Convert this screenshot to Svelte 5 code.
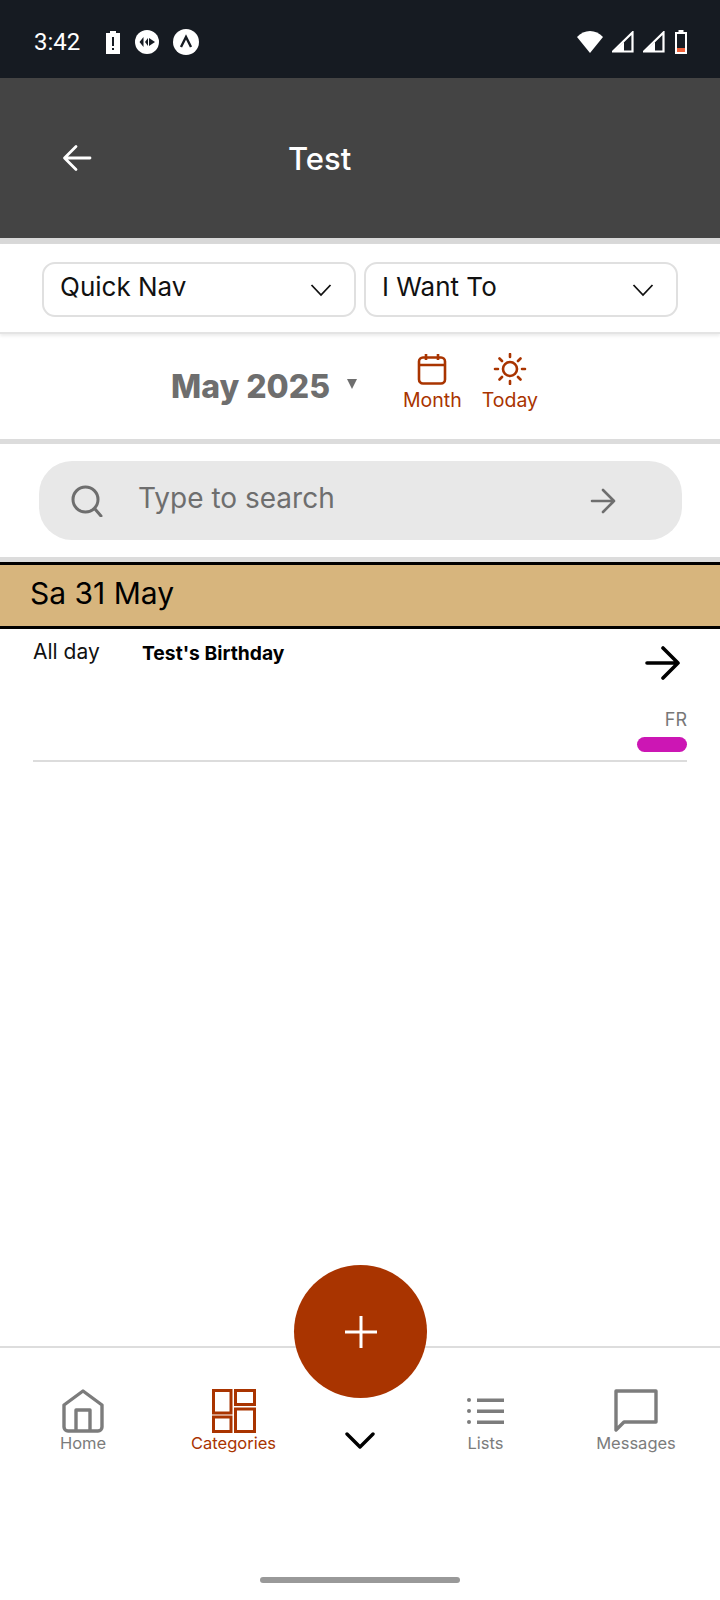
<script>
	const navItems = [
		{ label: 'Home', icon: 'home' },
		{ label: 'Categories', icon: 'grid', active: true },
		{ label: '', icon: 'more' },
		{ label: 'Lists', icon: 'list' },
		{ label: 'Messages', icon: 'chat' }
	];
</script>

<div class="page">
	<div class="status">
		<span class="time">3:42</span>
		<div class="status-left">
			<svg width="16" height="24" viewBox="0 0 16 24"><path d="M5 1h6v2h4v21H1V3h4z" fill="#fff" /><path d="M7 7h2v9H7zM7 18h2v2H7z" fill="#161b22" /></svg>
			<svg width="24" height="24" viewBox="0 0 24 24"><circle cx="12" cy="12" r="12" fill="#fff" /><path d="M4.500 12l4-5v10zM10 12l3-4v8zM14 8l6 4-6 4z" fill="#161b22" /></svg>
			<svg width="26" height="26" viewBox="0 0 26 26"><circle cx="13" cy="13" r="13" fill="#fff" /><path d="M8 18l5-10 5 10" fill="none" stroke="#161b22" stroke-width="2.400" /></svg>
		</div>
		<div class="status-right">
			<svg width="26" height="22" viewBox="0 0 26 22"><path d="M0 6C7-2 19-2 26 6L13 22z" fill="#fff" /></svg>
			<svg width="22" height="22" viewBox="0 0 22 22"><path d="M1 20.500L20.500 1.500V20.500z" fill="none" stroke="#fff" stroke-width="2.200" /><path d="M1 21L12 11v10z" fill="#fff" /></svg>
			<svg width="22" height="22" viewBox="0 0 22 22"><path d="M1 20.500L20.500 1.500V20.500z" fill="none" stroke="#fff" stroke-width="2.200" /><path d="M1 21L12 11v10z" fill="#fff" /></svg>
			<svg width="14" height="24" viewBox="0 0 14 24"><path d="M4.500 0h5v2H13v22H1V2h3.500z" fill="#fff" /><rect x="3" y="4" width="8" height="14" fill="#161b22" /><rect x="3" y="18" width="8" height="4" fill="#f0623a" /></svg>
		</div>
	</div>

	<header class="appbar">
		<svg class="back" width="30" height="28" viewBox="0 0 30 28"><path d="M28 14H3M14 2.500L2.500 14 14 25.500" fill="none" stroke="#fff" stroke-width="2.800" stroke-linecap="round" stroke-linejoin="round" /></svg>
		<h1>Test</h1>
	</header>

	<div class="select-row">
		<div class="select">
			<span>Quick Nav</span>
			<svg width="22" height="14" viewBox="0 0 22 14"><path d="M1.500 2L11 12l9.500-10" fill="none" stroke="#111" stroke-width="1.800" /></svg>
		</div>
		<div class="select">
			<span>I Want To</span>
			<svg width="22" height="14" viewBox="0 0 22 14"><path d="M1.500 2L11 12l9.500-10" fill="none" stroke="#111" stroke-width="1.800" /></svg>
		</div>
	</div>

	<div class="month-row">
		<span class="month">May 2025</span>
		<span class="caret"></span>
		<div class="action month-action">
			<svg width="30" height="32" viewBox="0 0 30 32" fill="none" stroke="#a93400" stroke-width="2.600"><rect x="2" y="4.500" width="26" height="26" rx="4" /><path d="M2 12h26M9 1v6M21 1v6" /></svg>
			<span>Month</span>
		</div>
		<div class="action">
			<svg width="34" height="32" viewBox="0 0 34 32" fill="none" stroke="#a93400" stroke-width="2.600" stroke-linecap="round"><circle cx="17" cy="16" r="7" /><path d="M17 1v3M17 28v3M2 16h3M29 16h3M6.500 5.500l2.500 2.500M27.500 5.500L25 8M6.500 26.500l2.500-2.500M27.500 26.500L25 24" /></svg>
			<span>Today</span>
		</div>
	</div>

	<div class="search-row">
		<div class="search">
			<svg width="32" height="32" viewBox="0 0 32 32" fill="none" stroke="#6e6e6e" stroke-width="3" stroke-linecap="round"><circle cx="14.500" cy="14.500" r="12.500" /><path d="M24 24l6 7" /></svg>
			<span class="placeholder">Type to search</span>
			<svg class="go" width="26" height="26" viewBox="0 0 26 26" fill="none" stroke="#6e6e6e" stroke-width="2.600" stroke-linecap="round" stroke-linejoin="round"><path d="M2 13h22M13 2l11 11-11 11" /></svg>
		</div>
	</div>

	<div class="day-head"><span>Sa 31 May</span></div>

	<div class="event">
		<div class="event-top">
			<span class="when">All day</span>
			<span class="title">Test's Birthday</span>
			<svg width="35" height="34" viewBox="0 0 35 34" fill="none" stroke="#000" stroke-width="3.600" stroke-linecap="round" stroke-linejoin="round"><path d="M2 17h31M18 2l15 15-15 15" /></svg>
		</div>
		<div class="tag">FR</div>
		<div class="pill"></div>
	</div>

	<div class="spacer"></div>

	<nav class="bottom">
		<button class="fab" aria-label="Add">
			<svg width="34" height="34" viewBox="0 0 34 34"><path d="M17 1v32M1 17h32" stroke="#fff" stroke-width="3" /></svg>
		</button>
		{#each navItems as item}
			<div class="nav-item" class:active={item.active}>
				{#if item.icon === 'home'}
					<svg width="42" height="44" viewBox="0 0 42 44" fill="none" stroke="#7c7c7c" stroke-width="3.400" stroke-linejoin="round"><path d="M2 16L21 2l19 14v22a4 4 0 0 1-4 4H6a4 4 0 0 1-4-4z" /><path d="M14 42V21h14v21" /></svg>
				{:else if item.icon === 'grid'}
					<svg width="44" height="44" viewBox="0 0 44 44" fill="none" stroke="#a93400" stroke-width="3"><rect x="1.500" y="1.500" width="17.500" height="22.500" /><rect x="1.500" y="28" width="17.500" height="14.500" /><rect x="23.500" y="1.500" width="19" height="14" /><rect x="23.500" y="20" width="19" height="22.500" /></svg>
				{:else if item.icon === 'list'}
					<svg class="list" width="37" height="26" viewBox="0 0 37 26" fill="#7c7c7c"><circle cx="2" cy="2" r="2" /><circle cx="2" cy="13" r="2" /><circle cx="2" cy="24" r="2" /><rect x="10" y="0.500" width="27" height="3.500" /><rect x="10" y="11.500" width="27" height="3.500" /><rect x="10" y="22.500" width="27" height="3.500" /></svg>
				{:else if item.icon === 'chat'}
					<svg width="44" height="44" viewBox="0 0 44 44" fill="none" stroke="#7c7c7c" stroke-width="3.400" stroke-linejoin="round"><path d="M2 2h40v31H10l-8 8z" /></svg>
				{:else}
					<svg class="more" width="30" height="18" viewBox="0 0 30 18"><path d="M2 2l13 13L28 2" fill="none" stroke="#000" stroke-width="3.400" stroke-linecap="round" stroke-linejoin="round" /></svg>
				{/if}
				{#if item.label}<span>{item.label}</span>{/if}
			</div>
		{/each}
	</nav>

	<div class="home-bar"><span></span></div>
</div>

<style>
	:global(body) {
		margin: 0;
		background: #fff;
	}

	.page {
		width: 720px;
		height: 1600px;
		display: flex;
		flex-direction: column;
		font-family: Inter, 'Open Sans', sans-serif;
		overflow: hidden;
	}

	svg {
		display: block;
		flex: none;
	}

	/* status bar */
	.status {
		height: 78px;
		flex: none;
		background: #161b22;
		display: flex;
		align-items: center;
		padding: 6px 32px 0 34px;
		box-sizing: border-box;
		color: #fff;
	}

	.time {
		font: 24px Roboto, sans-serif;
		width: 71px;
	}

	.status-left {
		display: flex;
		align-items: center;
		gap: 14px;
	}

	.status-right {
		margin-left: auto;
		display: flex;
		align-items: center;
		gap: 9px;
	}

	/* header */
	.appbar {
		height: 166px;
		flex: none;
		box-sizing: border-box;
		background: #444;
		display: flex;
		align-items: center;
		padding-left: 62px;
		border-bottom: 6px solid #d8d8d8;
	}

	h1 {
		margin: 0 0 0 196px;
		color: #fff;
		font: 500 31px Inter, sans-serif;
	}

	.select-row {
		height: 90px;
		flex: none;
		box-sizing: border-box;
		display: flex;
		gap: 8px;
		padding: 18px 42px 0;
		border-bottom: 2px solid #e4e4e4;
		box-shadow: 0 2px 3px #ececec;
	}

	.select {
		flex: 1;
		height: 55px;
		box-sizing: border-box;
		border: 2px solid #e0e0e0;
		border-radius: 13px;
		display: flex;
		align-items: center;
		justify-content: space-between;
		padding: 0 22px 0 16px;
		font-size: 26px;
		color: #111;
	}

	.select span {
		margin-top: -6px;
	}

	.month-row {
		height: 110px;
		flex: none;
		box-sizing: border-box;
		display: flex;
		align-items: center;
		padding-left: 171px;
		border-bottom: 5px solid #dcdcdc;
	}

	.month {
		font: 800 32px Inter, sans-serif;
		color: #6e6e6e;
		width: 176px;
	}

	.caret {
		width: 0;
		height: 0;
		border: 5.500px solid transparent;
		border-top: 10px solid #6e6e6e;
		border-bottom: 0;
		margin-top: -6px;
	}

	.action {
		display: flex;
		flex-direction: column;
		align-items: center;
		gap: 3px;
		color: #a93400;
		font-size: 19.500px;
		margin-left: 20px;
		margin-top: -8px;
	}

	.month-action {
		margin-left: 46px;
	}

	.search-row {
		height: 118px;
		flex: none;
		box-sizing: border-box;
		padding: 17px 38px 0 39px;
		border-bottom: 5px solid #dcdcdc;
	}

	.search {
		height: 79px;
		background: #e8e8e8;
		border-radius: 33px;
		display: flex;
		align-items: center;
		padding: 0 66px 0 32px;
	}

	.placeholder {
		font-size: 28px;
		color: #6e6e6e;
		margin-left: 35px;
		margin-top: -6px;
	}

	.go {
		margin-left: auto;
	}

	.day-head {
		height: 67px;
		flex: none;
		box-sizing: border-box;
		background: #d7b57d;
		border-top: 3px solid #000;
		border-bottom: 3px solid #000;
		padding-left: 30px;
		display: flex;
		align-items: center;
		font-size: 30px;
		color: #000;
	}

	.day-head span {
		margin-top: -5px;
	}

	.event {
		margin: 0 33px;
		height: 133px;
		flex: none;
		box-sizing: border-box;
		padding-bottom: 8px;
		border-bottom: 2px solid #dcdcdc;
		display: flex;
		flex-direction: column;
		align-items: flex-end;
	}

	.event-top {
		width: 100%;
		display: flex;
		align-items: flex-start;
		padding-top: 10px;
	}

	.when {
		width: 109px;
		font-size: 21px;
		color: #111;
	}

	.title {
		font-size: 19.300px;
		font-weight: 700;
		color: #000;
		line-height: 28px;
	}

	.event-top svg {
		margin-left: auto;
		margin-right: 7px;
		margin-top: 7px;
	}

	.tag {
		font-size: 18px;
		color: #777;
		margin-top: auto;
	}

	.pill {
		width: 50px;
		height: 15px;
		margin-top: 7px;
		background: #cc16b4;
		border-radius: 8px;
	}

	.spacer {
		flex: 1;
	}

	/* bottom nav */
	.bottom {
		position: relative;
		height: 216px;
		flex: none;
		box-sizing: border-box;
		border-top: 2px solid #ddd;
		display: grid;
		grid-template-columns: 166px 135px 118px 133px 168px;
		padding-top: 41px;
	}

	.nav-item {
		display: flex;
		flex-direction: column;
		align-items: center;
		justify-content: flex-start;
		height: 72px;
		font-size: 16.500px;
		color: #7c7c7c;
		position: relative;
	}

	.nav-item span {
		position: absolute;
		top: 44px;
	}

	.nav-item.active {
		color: #a93400;
	}

	.list {
		margin-top: 9px;
	}

	.more {
		margin-top: 43px;
	}

	.fab {
		position: absolute;
		left: 294px;
		top: -83px;
		width: 133px;
		height: 133px;
		border: 0;
		padding: 0;
		border-radius: 50%;
		background: #a93400;
		display: grid;
		place-items: center;
	}

	.home-bar {
		height: 38px;
		flex: none;
		box-sizing: border-box;
		padding-top: 15px;
	}

	.home-bar span {
		display: block;
		width: 200px;
		height: 6px;
		margin: 0 auto;
		border-radius: 3px;
		background: #999;
	}
</style>
